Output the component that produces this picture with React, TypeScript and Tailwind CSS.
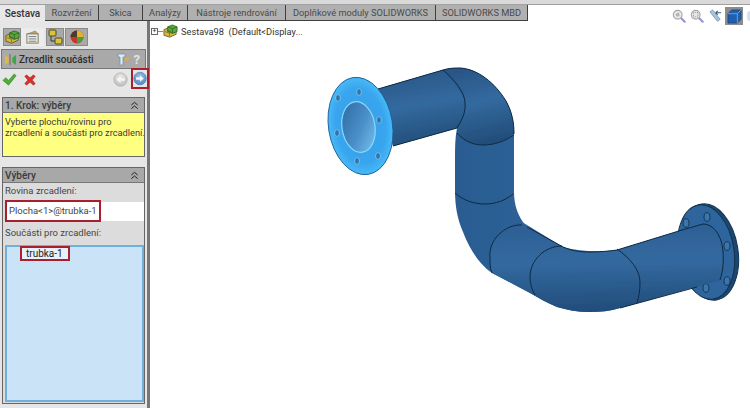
const FONT = "font-['Roboto','Liberation_Sans',sans-serif]";

const tabs = [
  { label: "Rozvržení", width: "w-[54px]" },
  { label: "Skica", width: "w-[44px]" },
  { label: "Analýzy", width: "w-[45px]" },
  { label: "Nástroje rendrování", width: "w-[98px]" },
  { label: "Doplňkové moduly SOLIDWORKS", width: "w-[150px]" },
  { label: "SOLIDWORKS MBD", width: "w-[92px]" },
];

function CubeIcon({ className }: { className?: string }) {
  return (
    <svg viewBox="0 0 16 16" className={className}>
      <path d="M1 6l7-3 6 2v6l-7 3-6-2z" fill="#d8b93a" stroke="#4a4a20" strokeWidth="0.8" />
      <path d="M5 3l5-2 5 2v5l-5 2-5-2z" fill="#58a83e" stroke="#2a5a20" strokeWidth="0.8" />
      <path d="M5 3l5 2 5-2M10 5v5" fill="none" stroke="#2a5a20" strokeWidth="0.7" />
      <path d="M2 8l5 2v3M4 6.500l5 2" fill="none" stroke="#4a4a20" strokeWidth="0.6" />
    </svg>
  );
}

function PanelTabs() {
  return (
    <div className="flex h-[18px] items-stretch pl-[3px]">
      <div className="flex w-[18px] items-center justify-center border border-[#8a8a8a] bg-[#a9a9a9]">
        <CubeIcon className="h-[15px] w-[15px]" />
      </div>
      <div className="flex w-[23px] items-center justify-center bg-[#ececec]">
        <svg viewBox="0 0 16 16" className="h-[15px] w-[15px]">
          <rect x="2" y="4" width="12" height="10" fill="#f1ead2" stroke="#77776a" />
          <path d="M3 4l8-3 3 3z" fill="#b9a26a" stroke="#77776a" strokeWidth="0.6" />
          <path d="M4 7h8M4 9.500h8M4 12h8" stroke="#6d7d99" />
        </svg>
      </div>
      <div className="ml-[2px] flex w-[18px] items-center justify-center border border-[#8a8a8a] bg-[#a9a9a9]">
        <svg viewBox="0 0 16 16" className="h-[16px] w-[16px]">
          <path d="M4 2v10h5" fill="none" stroke="#333" />
          <rect x="2" y="1" width="7" height="6" rx="1" fill="#d9c23c" stroke="#4c4a1c" />
          <rect x="8" y="9" width="7" height="6" rx="1" fill="#d9c23c" stroke="#4c4a1c" />
        </svg>
      </div>
      <div className="ml-px flex w-[23px] items-center justify-center border border-[#8a8a8a] bg-[#a9a9a9]">
        <svg viewBox="0 0 16 16" className="h-[16px] w-[16px]">
          <circle cx="8" cy="8" r="6.500" fill="#c9352b" />
          <path d="M8 1.500a6.500 6.500 0 0 1 6.500 6.500H8z" fill="#e0b52c" />
          <path d="M1.500 8A6.500 6.500 0 0 1 8 1.500V8z" fill="#4a3b30" />
          <path d="M8 8h6.500A6.500 6.500 0 0 1 8 14.500z" fill="#4d9b43" />
        </svg>
      </div>
    </div>
  );
}

function RoundArrow({ active, flip }: { active?: boolean; flip?: boolean }) {
  const id = active ? "arrow-on" : "arrow-off";
  return (
    <svg viewBox="0 0 16 16" className="h-[15px] w-[15px]">
      <defs>
        <radialGradient id={id} cx="50%" cy="35%" r="70%">
          <stop offset="0%" stopColor={active ? "#9cc2e8" : "#ececec"} />
          <stop offset="100%" stopColor={active ? "#4a83bd" : "#b8b8b8"} />
        </radialGradient>
      </defs>
      <circle cx="8" cy="8" r="7.200" fill={`url(#${id})`} stroke={active ? "#4a77a6" : "#b0b0b0"} strokeWidth="0.7" />
      <path
        d={flip ? "M12.500 6.600H8V4.400L3.600 8 8 11.600V9.400h4.500z" : "M3.500 6.600H8V4.400L12.400 8 8 11.600V9.400H3.500z"}
        fill="#f5f5f5"
      />
    </svg>
  );
}

function Chevrons() {
  return (
    <svg viewBox="0 0 10 10" className="h-[9px] w-[9px]">
      <path d="M1.500 4.500L5 1.500l3.500 3M1.500 8.500L5 5.500l3.500 3" fill="none" stroke="#222" strokeWidth="1.1" />
    </svg>
  );
}

function SectionHeader({ title }: { title: string }) {
  return (
    <div className="flex h-[15px] items-center justify-between border-b border-[#777] bg-[#a8a8a8] pl-[2px] pr-[5px] text-[10px] font-medium text-[#3a3a3a]">
      <span>{title}</span>
      <Chevrons />
    </div>
  );
}

function Magnifier({ box }: { box?: boolean }) {
  return (
    <svg viewBox="0 0 16 16" className="h-[14px] w-[14px]">
      <path d="M10 10l4.500 4.500" stroke="#8f95cf" strokeWidth="2.400" strokeLinecap="round" />
      <circle cx="6.500" cy="6.500" r="5" fill="#e9e9e9" stroke="#a8a8a8" strokeWidth="1.300" />
      {box ? (
        <rect x="4" y="4" width="5" height="5" fill="none" stroke="#8d8d8d" strokeDasharray="1 1" />
      ) : (
        <circle cx="6.500" cy="6.500" r="2.200" fill="#b5b5b5" />
      )}
    </svg>
  );
}

function Toolbar() {
  return (
    <div className="absolute right-[-3px] top-[-14px] z-10 flex items-center">
      <div className="mr-[4px]">
        <Magnifier />
      </div>
      <div className="mr-[4px]">
        <Magnifier box />
      </div>
      <svg viewBox="0 0 16 16" className="mr-[2px] h-[15px] w-[15px]">
        <path d="M2 3l8 10 3-2L5 1z" fill="#a9c3de" stroke="#6a7f95" strokeWidth="0.7" />
        <path d="M8 4h6M8 4l2.500-2M8 4l2.500 2" stroke="#3c5f8a" strokeWidth="1.100" fill="none" />
      </svg>
      <div className="flex h-[18px] w-[18px] items-center justify-center bg-[#8c8c8c]">
        <svg viewBox="0 0 16 16" className="h-[15px] w-[15px]">
          <path d="M1 5l4-4h10v10l-4 4H1z" fill="#1f5fae" stroke="#123a6a" strokeWidth="0.7" />
          <path d="M1 5h10l4-4M11 5v10" fill="none" stroke="#7fb4ea" strokeWidth="0.8" />
        </svg>
      </div>
      <div className="ml-[4px] h-[10px] w-[6px] rounded-full bg-[#d5e2ee]" />
    </div>
  );
}

function PipeModel() {
  return (
    <svg viewBox="150 21 600 387" className="absolute inset-0 h-full w-full">
      <defs>
        <linearGradient id="arm-top" x1="0.35" y1="0" x2="0.55" y2="1">
          <stop offset="0%" stopColor="#2a5585" />
          <stop offset="45%" stopColor="#336a9f" />
          <stop offset="100%" stopColor="#224c78" />
        </linearGradient>
        <linearGradient id="arm-mid" x1="0" y1="0" x2="1" y2="0">
          <stop offset="0%" stopColor="#25568a" />
          <stop offset="50%" stopColor="#2f6399" />
          <stop offset="100%" stopColor="#22507f" />
        </linearGradient>
        <linearGradient id="arm-low" x1="0.45" y1="0" x2="0.5" y2="1">
          <stop offset="0%" stopColor="#2d5f94" />
          <stop offset="45%" stopColor="#33699f" />
          <stop offset="100%" stopColor="#214c79" />
        </linearGradient>
        <radialGradient id="face" cx="50%" cy="50%" r="55%">
          <stop offset="0%" stopColor="#3c9fe8" />
          <stop offset="70%" stopColor="#38a5ee" />
          <stop offset="100%" stopColor="#4fc3fb" />
        </radialGradient>
        <linearGradient id="bore" x1="0" y1="0" x2="1" y2="1">
          <stop offset="0%" stopColor="#2c679f" />
          <stop offset="55%" stopColor="#4a8fc9" />
          <stop offset="100%" stopColor="#7cc6f3" />
        </linearGradient>
        <filter id="soft">
          <feGaussianBlur stdDeviation="0.4" />
        </filter>
      </defs>

      <g filter="url(#soft)">
        {/* far flange */}
        <ellipse cx="709" cy="252" rx="29" ry="48.500" transform="rotate(-9 709 252)" fill="#1c4670" stroke="#12324f" strokeWidth="1" />
        <ellipse cx="706" cy="252" rx="28" ry="47.500" transform="rotate(-9 706 252)" fill="#2f659c" stroke="#12324f" strokeWidth="1" />
        {[
          [686, 223],
          [707, 217],
          [727, 246],
          [727, 281],
          [706, 288],
        ].map(([cx, cy]) => (
          <ellipse key={cx + "-" + cy} cx={cx} cy={cy} rx="3" ry="4.300" fill="#3b74ab" stroke="#12324f" strokeWidth="0.9" />
        ))}

        {/* tube body */}
        <path
          d="M378 89L443 70C449 68 455 68 460 68C478 69 495 83 506 101C512 112 514 122 514 134V192C514 205 518 217 527 227L563 247C572 251 581 252 590 252C600 252 610 251 617 250L682 230L703 224C714 224 722 236 723 252C724 266 722 274 720 280L620 308C610 311 600 312 590 312C578 312 567 310 557 307C547 303 539 298 530 293L492 273C480 265 470 250 463 232C457 218 455 205 455 190V160C455 148 455 138 457 128L393 146z"
          fill="url(#arm-mid)"
        />
        <path d="M378 89L443 70C455 85 465 95 465 103C466 112 462 120 457 128L393 146z" fill="url(#arm-top)" />
        <path d="M443 70C449 68 455 68 460 68C478 69 495 83 506 101C512 112 514 122 514 134C505 141 495 145 483 145C472 145 463 140 457 133L457 128C462 120 466 112 465 103C465 95 455 80 443 70z" fill="url(#arm-top)" />
        <path d="M522 222C505 222 488 240 490 258C490 264 490 268 492 273L530 293C539 298 547 303 557 307C567 310 578 312 590 312C600 312 610 311 620 308L720 280C722 274 724 266 723 252C722 236 714 224 703 224L617 250C600 252 581 252 563 247z" fill="url(#arm-low)" />

        {/* outline and seams */}
        <g fill="none" stroke="#0e2a45" strokeWidth="1">
          <path d="M378 89L443 70C449 68 455 68 460 68C478 69 495 83 506 101C512 112 514 122 514 134" />
          <path d="M393 146L457 128" />
          <path d="M527 227L563 247C572 251 581 252 590 252C600 252 610 251 617 250L682 230L703 224C714 224 722 236 723 252C724 266 722 274 720 280" />
          <path d="M443 70C455 80 465 93 465 103C466 112 462 120 457 128" />
          <path d="M457 133C463 140 472 145 483 145C495 145 505 141 514 135" />
          <path d="M455 193C463 200 473 204 485 204C496 204 506 200 513 194" />
          <path d="M522 225C505 224 488 240 490 258C490 264 490 268 492 273" />
          <path d="M562 246C545 246 530 260 530 277C530 284 532 290 535 295" />
          <path d="M617 249C630 258 640 270 640 282C640 290 639 297 637 303" />
          <path d="M620 308L697 287" />
        </g>

        {/* mirror source flange */}
        <ellipse cx="360.500" cy="126" rx="32" ry="49" transform="rotate(-9 360.500 126)" fill="url(#face)" stroke="#1a5f9a" strokeWidth="0.9" />
        <ellipse cx="358.500" cy="127" rx="16.500" ry="25.500" transform="rotate(-9 358.500 127)" fill="url(#bore)" stroke="#86d9fb" strokeWidth="1.200" />
        {[
          [359, 92],
          [338, 98],
          [337, 133],
          [357, 161],
          [378, 156],
          [379, 120],
        ].map(([cx, cy]) => (
          <ellipse key={cx + "-" + cy} cx={cx} cy={cy} rx="2.400" ry="3.400" fill="#2f74ad" stroke="#9be2fc" strokeWidth="0.6" />
        ))}
      </g>
    </svg>
  );
}

export default function App() {
  return (
    <div className={`flex h-[408px] w-[750px] flex-col overflow-hidden bg-white text-[9px] ${FONT}`}>
      <div className="h-[4px] bg-[#d9d9d9]" />
      <div className="flex h-[17px] border-t border-[#a0a0a0] bg-white">
        <div className="flex w-[45px] items-center justify-center bg-[#e8e8e8] text-[10px] font-medium text-[#333]">
          Sestava
        </div>
        {tabs.map((tab) => (
          <div
            key={tab.label}
            className={`flex ${tab.width} items-center justify-center whitespace-nowrap border-b border-r border-[#3f3f3f] bg-[#b0b0b0] text-[9.25px] text-[#4a4a4a] first:border-l`}
          >
            {tab.label}
          </div>
        ))}
      </div>

      <div className="flex min-h-0 flex-1">
        <aside className="flex w-[150px] shrink-0 flex-col border-r-[3px] border-[#777] bg-[#e6e6e6] pt-[7px]">
          <PanelTabs />

          <div className="mx-[1px] mt-[3px] flex h-[20px] items-center justify-between border border-[#777] bg-[#a9a9a9] pl-[2px] pr-[5px]">
            <div className="flex items-center gap-[2px] text-[10px] font-medium text-[#2c2c2c]">
              <svg viewBox="0 0 14 14" className="h-[13px] w-[13px]">
                <path d="M1 2l4 3v5l-4 3z" fill="#e3b93a" />
                <path d="M6.500 1v12" stroke="#555" strokeWidth="0.8" />
                <path d="M13 2L9 5v5l4 3z" fill="#39a845" />
              </svg>
              Zrcadlit součásti
            </div>
            <div className="flex items-center gap-[3px]">
              <svg viewBox="0 0 14 14" className="h-[14px] w-[14px]">
                <path d="M1 2h7v3H6v8H3V5H1z" fill="#dfeaf0" stroke="#6f8c9e" strokeWidth="0.7" />
                <path d="M8 5l5 1.500-4 3z" fill="#f0a63a" />
              </svg>
              <span className="text-[13px] font-bold leading-none text-[#e3e3e3]">?</span>
            </div>
          </div>

          <div className="flex h-[28px] items-start justify-between pl-[2px]">
            <div className="mt-[3px] flex items-center gap-[6px]">
              <svg viewBox="0 0 16 16" className="h-[15px] w-[15px]">
                <path d="M1 9l3-3 3 3 6-7 2 2-8 10z" fill="#4fae36" stroke="#2f7d22" strokeWidth="0.6" />
              </svg>
              <svg viewBox="0 0 16 16" className="h-[14px] w-[14px]">
                <path d="M2 4l2-2 4 3.500 4-3.500 2 2-3.500 4 3.500 4-2 2-4-3.500-4 3.500-2-2 3.500-4z" fill="#d9302a" stroke="#9b1d1a" strokeWidth="0.5" />
              </svg>
            </div>
            <div className="mr-[-2px] flex items-center gap-[3px]">
              <RoundArrow flip />
              <div className="mt-[-1px] flex h-[21px] w-[18px] items-center justify-center border-2 border-[#a81f2d]">
                <RoundArrow active />
              </div>
            </div>
          </div>

          <section className="mx-[2px] border border-[#666]">
            <SectionHeader title="1. Krok: výběry" />
            <div className="h-[43px] whitespace-nowrap bg-[#ffff80] pl-[2px] pt-[3px] text-[9.25px] leading-[11px] text-[#3a3a3a]">
              Vyberte plochu/rovinu pro
              <br />
              zrcadlení a součásti pro zrcadlení.
            </div>
          </section>

          <section className="mx-[2px] mb-[4px] mt-[10px] flex min-h-0 flex-1 flex-col border border-[#666] bg-[#dcdcdc]">
            <SectionHeader title="Výběry" />
            <div className="mt-px h-[13px] pl-[2px] text-[9.5px] leading-[13px] text-[#444]">Rovina zrcadlení:</div>
            <div className="relative ml-[2px] mt-[5px] h-[19px] bg-white">
              <div className="absolute left-0 top-[-2px] flex h-[22px] w-[96px] items-center whitespace-nowrap border-2 border-[#a81f2d] pl-[2px] text-[9.5px] text-[#444]">
                Plocha&lt;1&gt;@trubka-1
              </div>
            </div>
            <div className="mt-[5px] h-[13px] pl-[2px] text-[9.5px] leading-[13px] text-[#444]">Součásti pro zrcadlení:</div>
            <div className="mb-px ml-[2px] mt-[6px] flex-1 border-2 border-[#6fb1dc] bg-[#cbe3f7] pl-[13px]">
              <div className="mt-[-1px] flex h-[15px] w-[50px] items-center border-2 border-[#a81f2d] bg-[#e8f1fa] pl-[4px] text-[10px] text-[#222]">
                trubka-1
              </div>
            </div>
          </section>
        </aside>

        <main className="relative min-w-0 flex-1">
          <PipeModel />
          <Toolbar />
          <div className="relative flex items-center pl-[1px] pt-[3px] text-[9.25px] text-[#333]">
            <div className="flex h-[7px] w-[7px] items-center justify-center border border-[#666] bg-white text-[7px] leading-none">
              +
            </div>
            <div className="h-px w-[5px] bg-[#888]" />
            <CubeIcon className="h-[15px] w-[15px]" />
            <span className="ml-[3px] whitespace-pre">Sestava98  (Default&lt;Display...</span>
          </div>
        </main>
      </div>
    </div>
  );
}
